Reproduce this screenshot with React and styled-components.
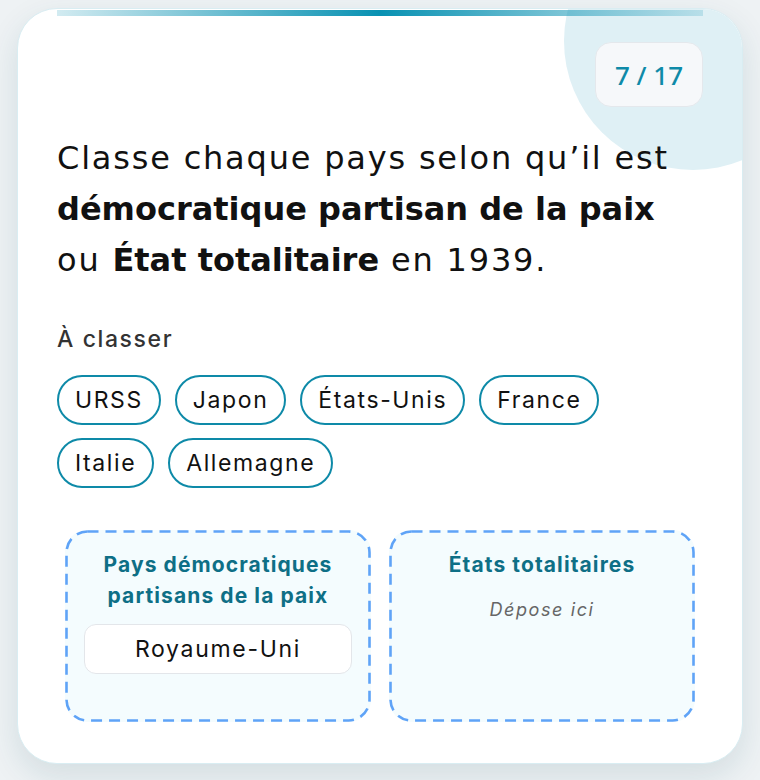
import React from 'react';
import styled, { createGlobalStyle } from 'styled-components';

const GlobalStyle = createGlobalStyle`
  body {
    margin: 0;
    background: #eef2f4;
    font-family: Inter, "Noto Sans", sans-serif;
  }
`;

const Page = styled.div`
  padding: 8px 17px 17px;
`;

const Card = styled.div`
  position: relative;
  overflow: hidden;
  background: #ffffff;
  border: 1px solid #d9edf2;
  border-radius: 40px;
  padding: 33px 39px 41px;
  box-shadow: 0 12px 32px rgba(20, 70, 90, 0.12);
`;

const TopBar = styled.div`
  position: absolute;
  top: 1px;
  left: 39px;
  right: 39px;
  height: 6px;
  background: linear-gradient(
    90deg,
    rgba(8, 145, 178, 0.18),
    #0891b2 50%,
    rgba(8, 145, 178, 0.18)
  );
`;

const Blob = styled.div`
  position: absolute;
  top: -97px;
  right: -80px;
  width: 258px;
  height: 258px;
  border-radius: 50%;
  background: #dff0f5;
`;

const Header = styled.div`
  position: relative;
  display: flex;
  justify-content: flex-end;
`;

const Counter = styled.div`
  width: 108px;
  height: 65px;
  box-sizing: border-box;
  display: flex;
  align-items: center;
  justify-content: center;
  background: #f6f8fa;
  border: 1px solid #e4e8ec;
  border-radius: 16px;
  color: #0e8aa8;
  font-family: "Noto Sans", sans-serif;
  font-size: 26px;
  font-weight: 500;
`;

const Question = styled.h2`
  position: relative;
  max-width: 630px;
  margin: 26px 0 0;
  font-family: "DejaVu Sans", sans-serif;
  font-size: 32px;
  line-height: 51px;
  font-weight: 400;
  color: #111;
  letter-spacing: 1.8px;

  b {
    font-weight: 700;
    letter-spacing: 0;
  }
`;

const SectionLabel = styled.div`
  margin-top: 39px;
  font-size: 23px;
  font-weight: 500;
  color: #333;
  letter-spacing: 1.6px;
`;

const ChipList = styled.div`
  display: flex;
  flex-wrap: wrap;
  gap: 13px 14px;
  margin-top: 22px;
`;

const Chip = styled.div`
  height: 50px;
  box-sizing: border-box;
  display: flex;
  align-items: center;
  padding: 0 16px;
  border: 2px solid #0e8aa8;
  border-radius: 25px;
  background: #fff;
  font-size: 23px;
  color: #111;
  letter-spacing: 1.6px;
`;

const Zones = styled.div`
  display: grid;
  grid-template-columns: 1fr 1fr;
  gap: 18px;
  margin: 42px 8px 0;
`;

const Zone = styled.div`
  position: relative;
  min-height: 192px;
  box-sizing: border-box;
  padding: 19px 19px;
  border-radius: 22px;
  background: #f4fcfe;
  display: flex;
  flex-direction: column;
  align-items: stretch;
`;

/* dashed outline drawn with longer dashes than a CSS dashed border gives */
const ZoneOutline = styled.svg`
  position: absolute;
  inset: 0;
  width: 100%;
  height: 100%;
  pointer-events: none;
  overflow: visible;

  rect {
    x: 1.5px;
    y: 1.5px;
    width: calc(100% - 3px);
    height: calc(100% - 3px);
    rx: 21px;
    fill: none;
    stroke: #5fa3f7;
    stroke-width: 2.6px;
    stroke-dasharray: 11 7;
  }
`;

const ZoneTitle = styled.div`
  position: relative;
  text-align: center;
  font-size: 21px;
  line-height: 31px;
  font-weight: 700;
  color: #0e6f86;
  letter-spacing: 1.1px;
`;

const Placeholder = styled.div`
  position: relative;
  margin-top: 19px;
  text-align: center;
  font-size: 18px;
  font-style: italic;
  color: #666;
  letter-spacing: 1.6px;
`;

const Placed = styled.div`
  position: relative;
  margin-top: 13px;
  height: 50px;
  box-sizing: border-box;
  display: flex;
  align-items: center;
  justify-content: center;
  background: #fff;
  border: 1px solid #e3e6ea;
  border-radius: 12px;
  font-size: 23px;
  color: #111;
  letter-spacing: 1.7px;
`;

const pending = ['URSS', 'Japon', 'États-Unis', 'France', 'Italie', 'Allemagne'];

const zones = [
  { title: 'Pays démocratiques partisans de la paix', items: ['Royaume-Uni'] },
  { title: 'États totalitaires', items: [] },
];

export default function App() {
  return (
    <Page>
      <GlobalStyle />
      <Card>
        <Blob />
        <TopBar />
        <Header>
          <Counter>7 / 17</Counter>
        </Header>
        <Question>
          Classe chaque pays selon qu’il est <b>démocratique partisan de la paix</b> ou{' '}
          <b>État totalitaire</b> en 1939.
        </Question>
        <SectionLabel>À classer</SectionLabel>
        <ChipList>
          {pending.map((name) => (
            <Chip key={name}>{name}</Chip>
          ))}
        </ChipList>
        <Zones>
          {zones.map((zone) => (
            <Zone key={zone.title}>
              <ZoneOutline aria-hidden="true">
                <rect />
              </ZoneOutline>
              <ZoneTitle>{zone.title}</ZoneTitle>
              {zone.items.length === 0 ? (
                <Placeholder>Dépose ici</Placeholder>
              ) : (
                zone.items.map((item) => <Placed key={item}>{item}</Placed>)
              )}
            </Zone>
          ))}
        </Zones>
      </Card>
    </Page>
  );
}
